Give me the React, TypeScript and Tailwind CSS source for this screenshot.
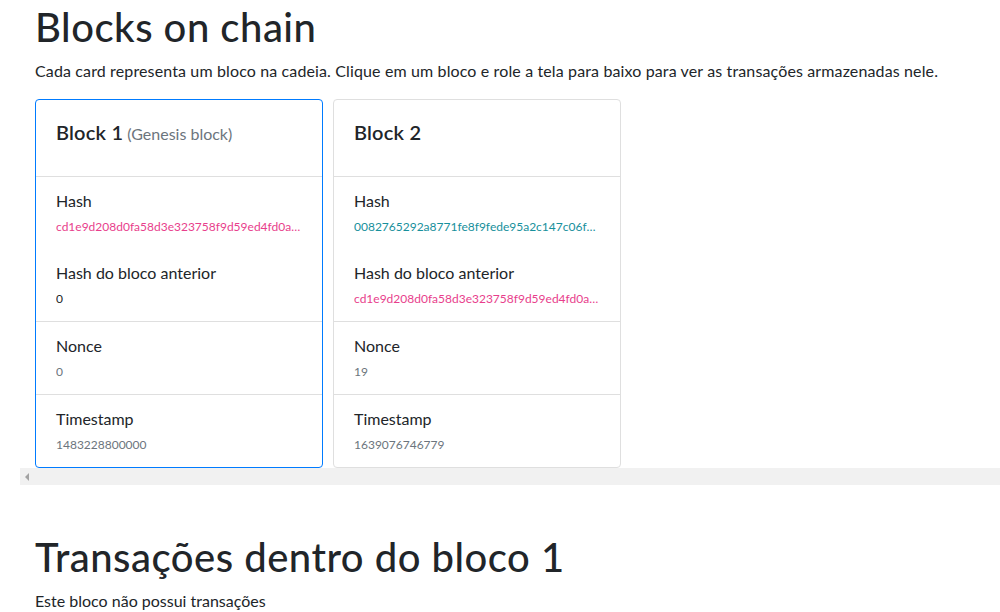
const blocks = [
	{
		id: 1,
		genesis: true,
		active: true,
		hash: "cd1e9d208d0fa58d3e323758f9d59ed4fd0a0a5e8bc3a1d20a5f0e4a2b7c9d10",
		hashColor: "text-[#e83e8c]",
		prev: "0",
		prevColor: "text-[#212529]",
		nonce: "0",
		timestamp: "1483228800000",
	},
	{
		id: 2,
		genesis: false,
		active: false,
		hash: "0082765292a8771fe8f9fede95a2c147c06f3d1e0b9a8c7d6e5f4a3b2c1d0e9f",
		hashColor: "text-[#17909c]",
		prev: "cd1e9d208d0fa58d3e323758f9d59ed4fd0a0a5e8bc3a1d20a5f0e4a2b7c9d10",
		prevColor: "text-[#e83e8c]",
		nonce: "19",
		timestamp: "1639076746779",
	},
];

function Field({ label, value, color, last }: { label: string; value: string; color: string; last?: boolean }) {
	return (
		<div className={last ? "" : "mb-6"}>
			<div className="text-base leading-6">{label}</div>
			<div className={`truncate pt-1 text-[12px] leading-5 ${color}`}>{value}</div>
		</div>
	);
}

function BlockCard({ block }: { block: (typeof blocks)[number] }) {
	return (
		<div
			className={`w-[288px] shrink-0 rounded border bg-white ${
				block.active ? "border-[#007bff]" : "border-[#dfdfdf]"
			}`}
		>
			<div className="border-b border-[#dfdfdf] p-5">
				<h5 className="mb-3 h-6 text-[20px] font-semibold leading-6 tracking-[0.2px]">
					Block {block.id}
					{block.genesis && (
						<span className="text-base font-normal leading-none tracking-normal text-[#6c757d]"> (Genesis block)</span>
					)}
				</h5>
			</div>
			<div className="border-b border-[#dfdfdf] px-5 py-3">
				<Field label="Hash" value={block.hash} color={block.hashColor} />
				<Field label="Hash do bloco anterior" value={block.prev} color={block.prevColor} last />
			</div>
			<div className="border-b border-[#dfdfdf] px-5 py-3">
				<Field label="Nonce" value={block.nonce} color="text-[#6c757d]" last />
			</div>
			<div className="px-5 py-3">
				<Field label="Timestamp" value={block.timestamp} color="text-[#6c757d]" last />
			</div>
		</div>
	);
}

export default function App() {
	return (
		<div className="min-h-screen bg-white pl-5 text-[#212529] font-['Lato','Noto_Sans',sans-serif]">
			<div className="px-[15px] pt-[3px]">
				<h1 className="mb-2 text-[40px] font-medium leading-[48px] tracking-[0.5px]">Blocks on chain</h1>
				<p className="mb-4 text-base leading-6 tracking-[0.13px]">
					Cada card representa um bloco na cadeia. Clique em um bloco e role a tela para baixo para ver as transações
					armazenadas nele.
				</p>
			</div>
			<div className="flex gap-[10px] px-[15px]">
				{blocks.map((b) => (
					<BlockCard key={b.id} block={b} />
				))}
			</div>
			<div className="flex h-[17px] items-center bg-[#f1f1f1] pl-[5px]">
				<div className="h-0 w-0 border-y-[4px] border-r-[4px] border-y-transparent border-r-[#a3a3a3]" />
			</div>
			<div className="px-[15px] pt-12">
				<h1 className="mb-2 text-[40px] font-medium leading-[48px] tracking-[0.5px]">Transações dentro do bloco 1</h1>
				<p className="text-base leading-6">Este bloco não possui transações</p>
			</div>
		</div>
	);
}
